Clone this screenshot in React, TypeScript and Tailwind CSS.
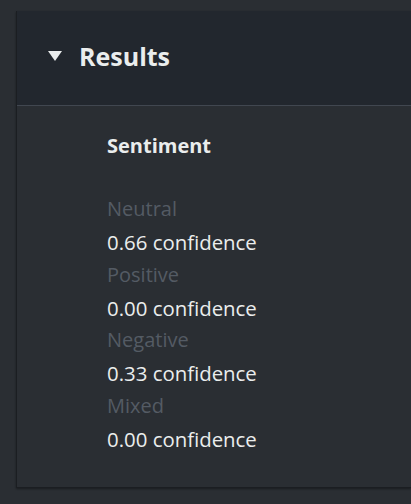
import React from "react";

const rows = [
  { label: "Neutral", value: "0.66 confidence" },
  { label: "Positive", value: "0.00 confidence" },
  { label: "Negative", value: "0.33 confidence" },
  { label: "Mixed", value: "0.00 confidence" },
];

export default function App() {
  return (
    <div
      className="w-[411px] h-[504px] bg-[#2a2e33] pl-4 pt-[11px] overflow-hidden"
      style={{ fontFamily: '"Open Sans", "Noto Sans", sans-serif' }}
    >
      <div className="h-[477px] bg-[#2a2e33] border-l border-b border-[#1b1e22] shadow-[0_1px_2px_rgba(0,0,0,0.4)]">
        <div className="h-[95px] bg-[#22272e] border-b border-[#414750] flex items-center pl-[30px]">
          <svg width="16" height="12" viewBox="0 0 16 12" className="mr-[16px] mb-[4px]">
            <polygon points="1,1 15,1 8,11" fill="#eaeded" />
          </svg>
          <span className="text-[25px] font-bold text-[#eaeded] leading-none mb-[4px]">Results</span>
        </div>
        <div className="pl-[90px] pt-[27px]">
          <div className="text-[20px] font-bold text-[#eaeded] leading-[26px]">Sentiment</div>
          <div className="mt-[34px]">
            {rows.map((r) => (
              <div key={r.label}>
                <div className="text-[20px] text-[#545b64] leading-[32.86px]">{r.label}</div>
                <div className="text-[20.4px] text-[#eaeded] leading-[32.86px]">{r.value}</div>
              </div>
            ))}
          </div>
        </div>
      </div>
    </div>
  );
}
